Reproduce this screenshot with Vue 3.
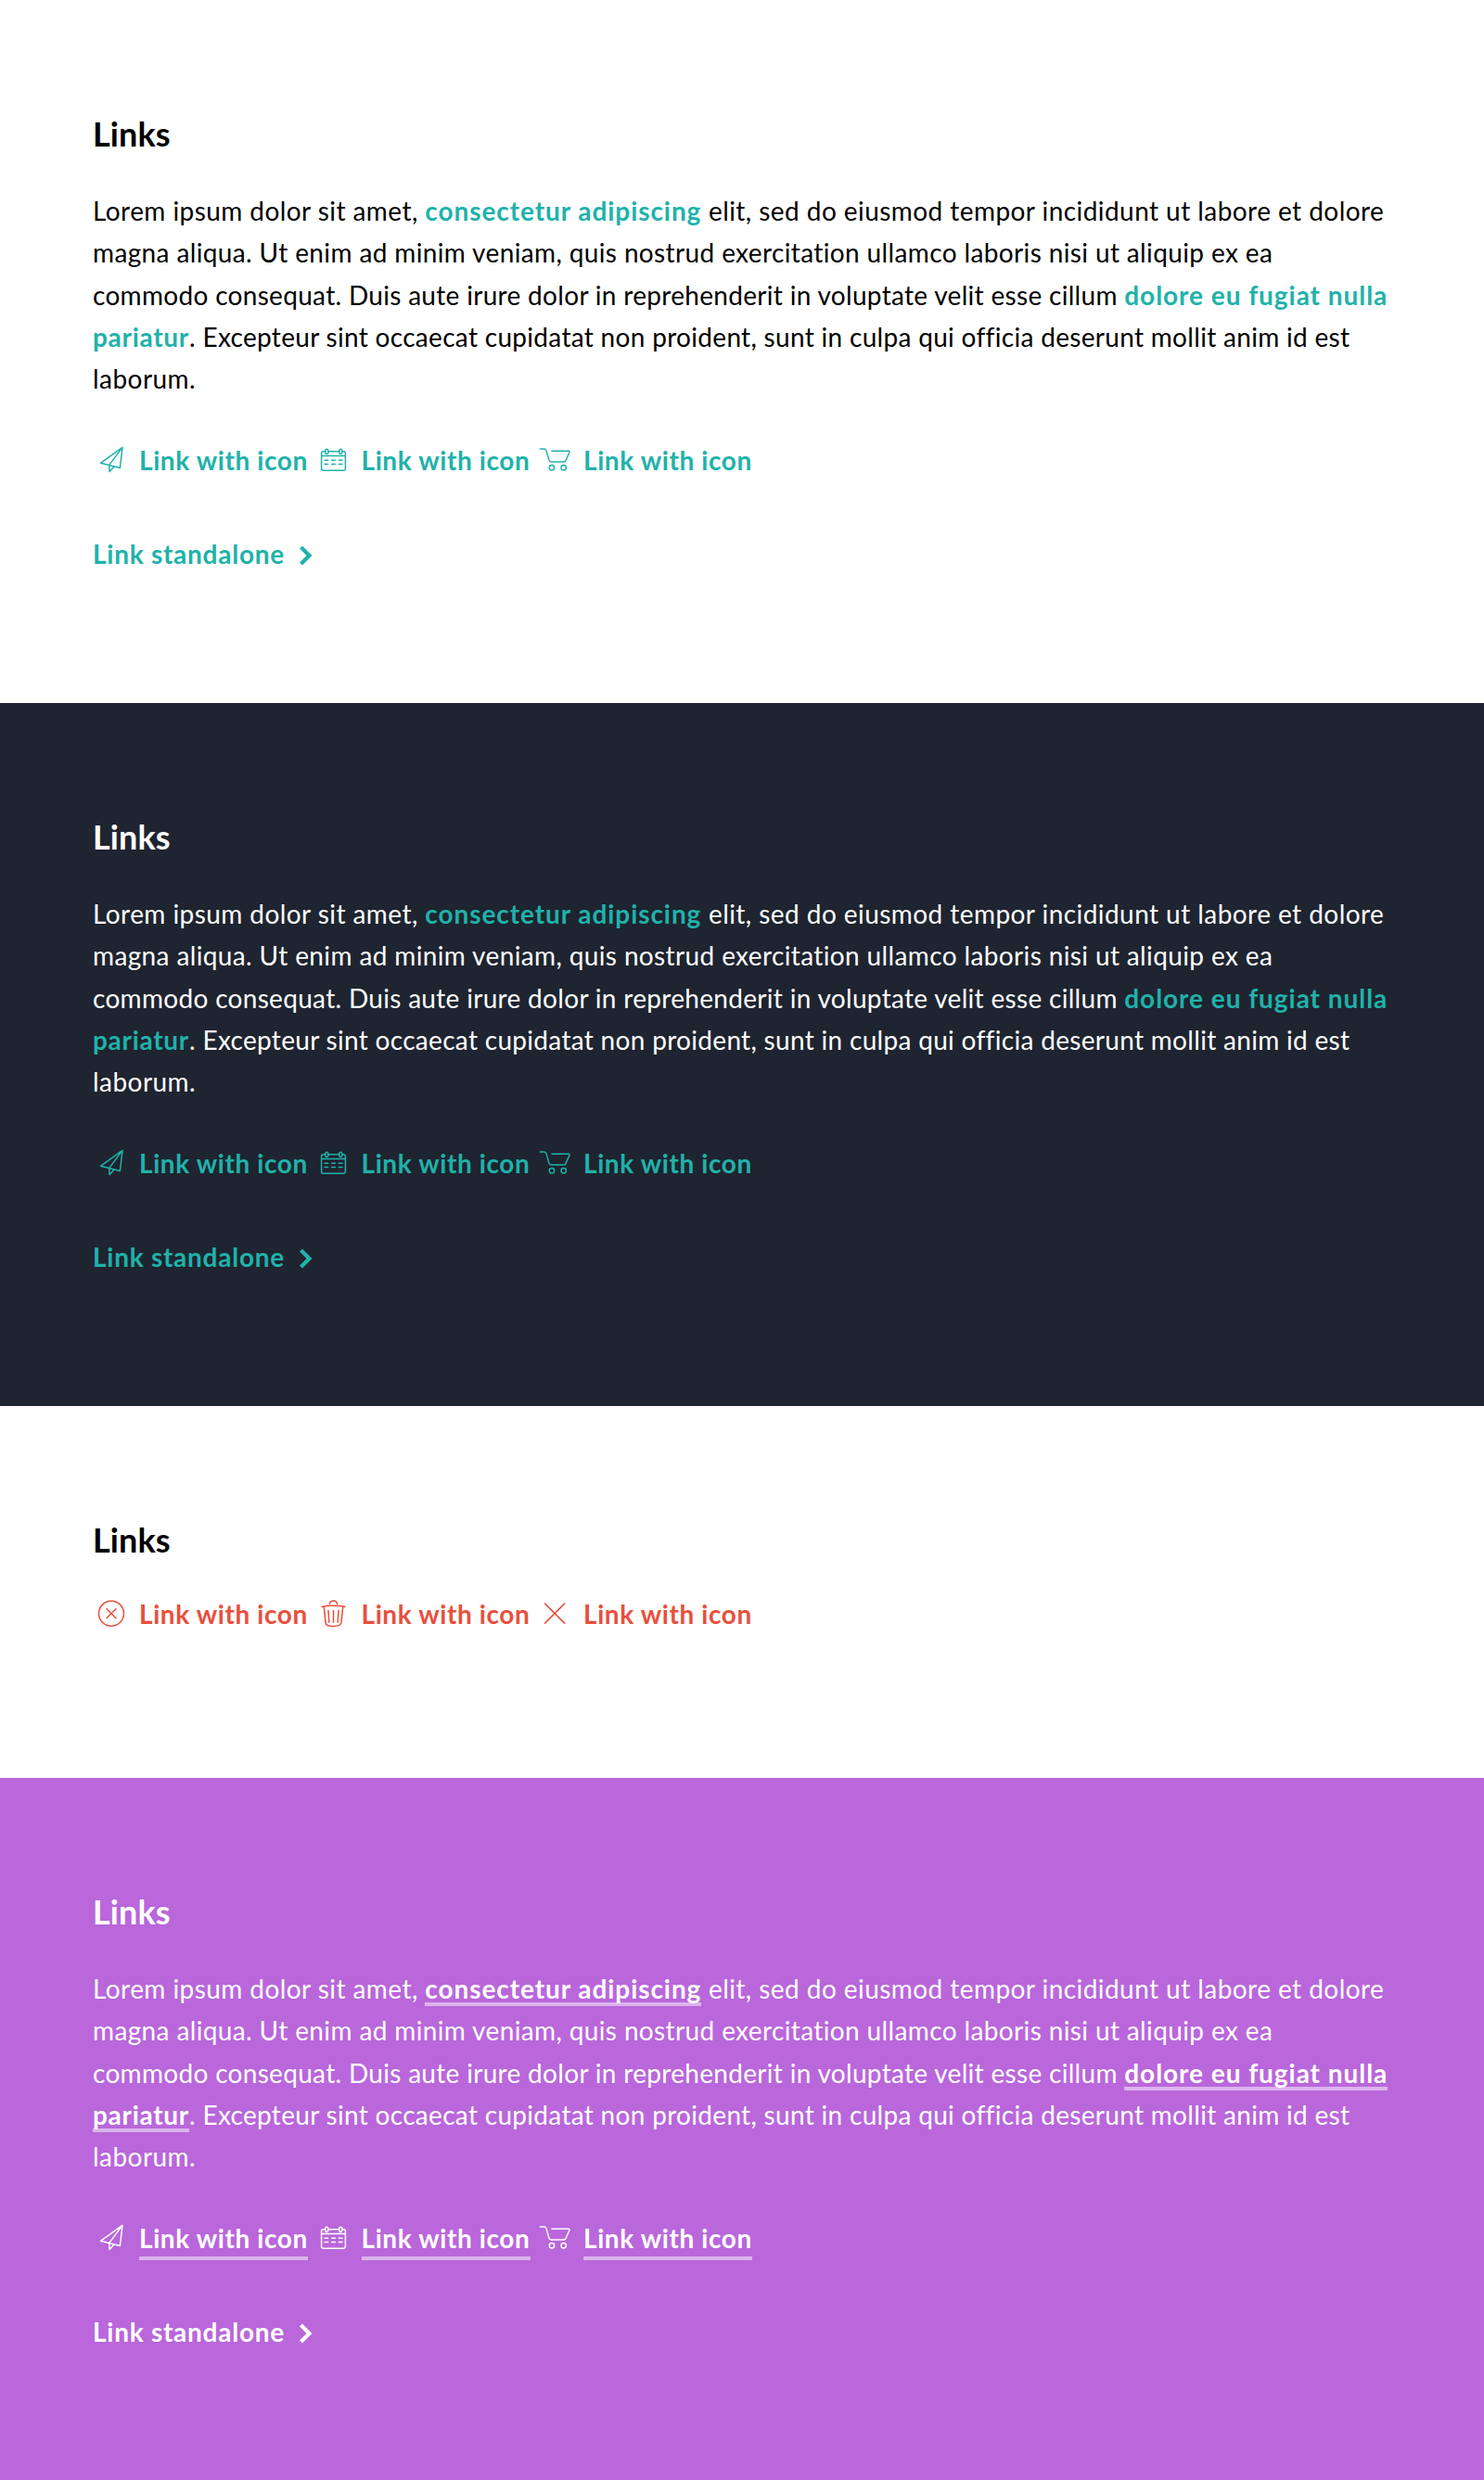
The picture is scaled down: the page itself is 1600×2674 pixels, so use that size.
<script setup>
const lines = [
  [
    { text: 'Lorem ipsum dolor sit amet, ', track: 0.43 },
    { text: 'consectetur adipiscing', track: 0.93, link: true },
    { text: ' elit, sed do eiusmod tempor incididunt ut labore et dolore', track: 0.44 },
  ],
  [{ text: 'magna aliqua. Ut enim ad minim veniam, quis nostrud exercitation ullamco laboris nisi ut aliquip ex ea', track: 0.37 }],
  [
    { text: 'commodo consequat. Duis aute irure dolor in reprehenderit in voluptate velit esse cillum ', track: 0.31 },
    { text: 'dolore eu fugiat nulla', track: 0.95, link: true },
  ],
  [
    { text: 'pariatur', track: 0.71, link: true },
    { text: '. Excepteur sint occaecat cupidatat non proident, sunt in culpa qui officia deserunt mollit anim id est', track: 0.31 },
  ],
  [{ text: 'laborum.', track: 0.45 }],
]

const icons = {
  plane: 'M32 6.4 8.4 23.3l21 5.2zM32 6.4 17.6 25.6l.5 6.9 4.9-5.5',
  calendar:
    'M11 10.7H8.6a2 2 0 0 0-2 2v16.6a2 2 0 0 0 2 2h21.8a2 2 0 0 0 2-2V12.7a2 2 0 0 0-2-2H28.8M14 10.7h11M6.6 15.4h25.800M12.3 8.3a1.5 1.5 0 0 1 1.5 1.5v2.2a1.5 1.5 0 0 1-3 0V9.8a1.5 1.5 0 0 1 1.5-1.5zM27.3 8.3a1.5 1.5 0 0 1 1.5 1.5v2.2a1.5 1.5 0 0 1-3 0V9.8a1.5 1.5 0 0 1 1.5-1.5zM10 20.2h3.700M17.700 20.200h3.700M25.300 20.200h3.700M10 24.600h3.700M17.700 24.600h3.700M25.300 24.600h3.700',
  cart:
    'M3.3 8h4.200c1.300 0 2.100.6 2.500 1.900l2.900 10.200c.4 1.300 1.100 1.900 2.400 1.900h13.600c1 0 1.700-.5 2.100-1.500l3.900-8.800c.4-.9 0-1.400-.9-1.400H15.900M18.700 28.200a2.700 2.700 0 1 1-5.400 0 2.700 2.700 0 0 1 5.400 0zM31.400 28.200a2.700 2.700 0 1 1-5.400 0 2.700 2.700 0 0 1 5.400 0z',
  circle: 'M33.500 19.700a13.500 13.500 0 1 1-27 0 13.500 13.500 0 0 1 27 0zM15 14.700l10 10M25 14.700l-10 10',
  trash:
    'M15.300 9.400c.5-2.200 2.100-3.500 4.200-3.500s3.700 1.300 4.200 3.500M7 12.500c3-.9 7.500-1.300 12.500-1.300s9.500.4 12.500 1.300M9.300 12.500l1.700 16.800c.3 3 3.600 4.200 8.500 4.200s8.200-1.200 8.500-4.200l1.700-16.800M14 16.500l.8 12.700M19.500 16.500v12.700M25 16.500l-.8 12.700',
  close: 'M8.600 9.100l21 21M29.600 9.100l-21 21',
}

const regular = ['plane', 'calendar', 'cart']
const sections = [
  { theme: 'light', full: true, icons: regular },
  { theme: 'dark', full: true, icons: regular },
  { theme: 'danger', full: false, icons: ['circle', 'trash', 'close'] },
  { theme: 'accent', full: true, icons: regular },
]
</script>

<template>
  <main class="page">
    <section v-for="s in sections" :key="s.theme" class="section" :class="s.theme">
      <h2 class="title">Links</h2>
      <p v-if="s.full" class="copy">
        <span v-for="(line, i) in lines" :key="i" class="line"><component
          :is="part.link ? 'a' : 'span'"
          v-for="part in line"
          :key="part.text"
          :class="{ link: part.link }"
          :style="{ letterSpacing: part.track + 'px' }"
        >{{ part.text }}</component></span>
      </p>
      <div class="icon-links">
        <a v-for="name in s.icons" :key="name" class="icon-link">
          <svg class="icon" viewBox="0 0 40 40"><path :d="icons[name]" /></svg>
          <span class="label">Link with icon</span>
        </a>
      </div>
      <a v-if="s.full" class="standalone">
        <span>Link standalone</span>
        <svg class="chevron" viewBox="0 0 16 24"><path d="M3.500 3l9 9-9 9" /></svg>
      </a>
    </section>
  </main>
</template>

<style>
body {
  margin: 0;
}
</style>

<style scoped>
.page {
  width: 1600px;
  font-family: Lato, "Open Sans", sans-serif;
  font-size: 28px;
  line-height: 45.33px;
}
.section {
  box-sizing: border-box;
  height: 758px;
  padding: 122px 100px 0;
  color: #000;
  background: #fff;
  --link: #20b2aa;
}
.dark {
  color: #fff;
  background: #1e2430;
}
.danger {
  height: 401px;
  --link: #e94f3d;
}
.accent {
  height: 757px;
  color: #fff;
  background: #b967db;
  --link: #fff;
}
.title {
  margin: 0 0 38px;
  font-size: 36px;
  font-weight: 700;
  line-height: 45px;
  letter-spacing: 0.1px;
}
.danger .title {
  margin-bottom: 35px;
}
.copy {
  margin: 0 0 42.5px;
}
.line {
  display: block;
  white-space: pre;
}
.link,
.icon-link,
.standalone {
  color: var(--link);
  font-weight: 700;
}
.icon-links {
  display: flex;
  height: 45.33px;
}
.icon-link {
  display: flex;
  align-items: flex-start;
  width: 239.5px;
}
.icon {
  flex: none;
  width: 40px;
  height: 40px;
  margin: 1.5px 10px 0 0;
  fill: none;
  stroke: currentColor;
  stroke-width: 1.5;
  stroke-linecap: round;
  stroke-linejoin: round;
}
.label {
  flex: none;
  width: 182px;
  white-space: nowrap;
  letter-spacing: 0.6px;
}
.standalone {
  display: flex;
  align-items: flex-start;
  margin-top: 56px;
  letter-spacing: 0.74px;
}
.chevron {
  width: 16px;
  height: 24px;
  margin: 12px 0 0 14.5px;
  fill: none;
  stroke: currentColor;
  stroke-width: 4.2;
}
.accent .link {
  padding-bottom: 2px;
  background: linear-gradient(rgba(255, 255, 255, 0.5), rgba(255, 255, 255, 0.5)) 0 100% / 100% 4px no-repeat;
}
.accent .label {
  height: 42px;
  border-bottom: 4px solid rgba(255, 255, 255, 0.5);
}
</style>
